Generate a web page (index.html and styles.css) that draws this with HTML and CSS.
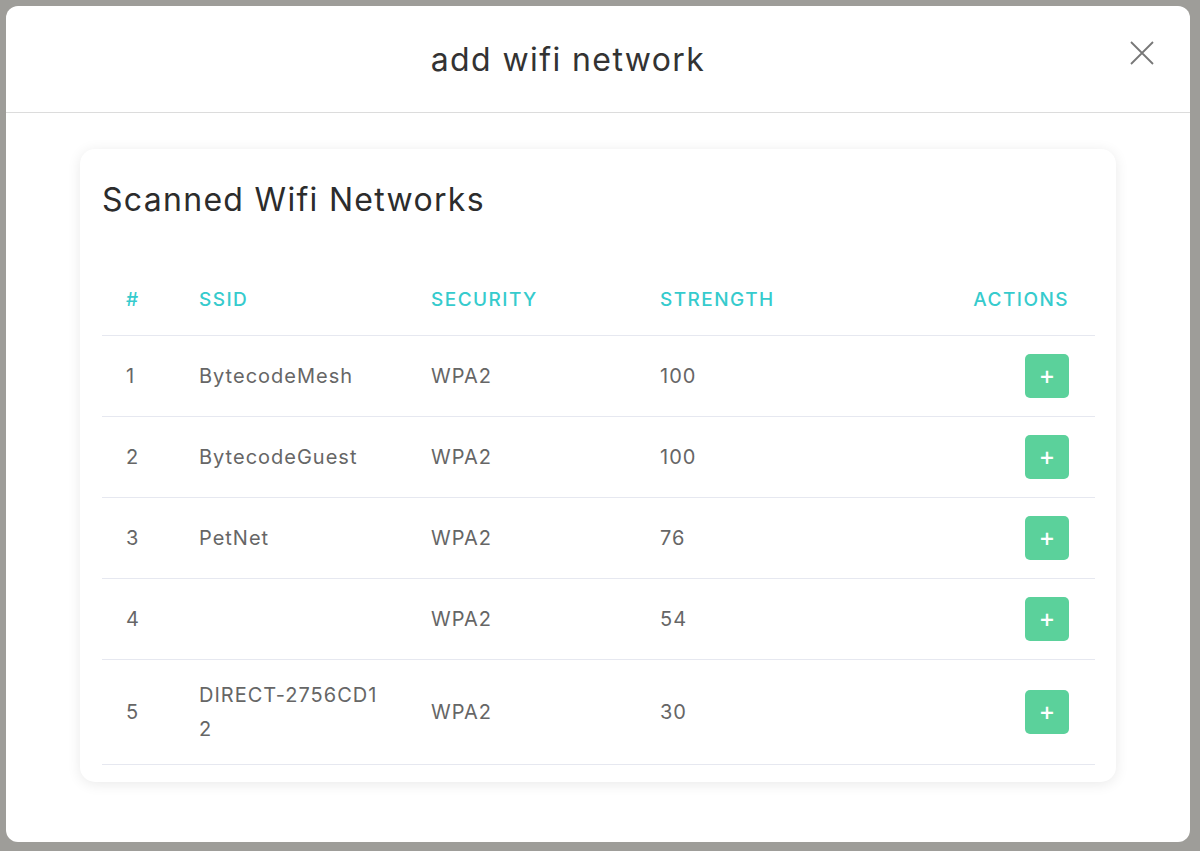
FILE: index.html
```html
<!DOCTYPE html>
<html lang="en">
<head>
    <meta charset="UTF-8">
    <meta name="viewport" content="width=device-width, initial-scale=1.0">
    <link rel="stylesheet" href="styles.css">
    <title>add wifi network</title>
</head>
<body>
    <div class="backdrop">
    <div class="modal">
        <div class="modal-header">
            <h1 class="modal-title">add wifi network</h1>
            <button class="close-btn" type="button" aria-label="Close">
                <svg width="24" height="24" viewBox="0 0 24 24">
                    <path d="M1 1 L23 23 M23 1 L1 23" stroke="#777" stroke-width="1.8" fill="none"/>
                </svg>
            </button>
        </div>
        <div class="modal-body">
            <div class="card">
                <h2 class="card-title">Scanned Wifi Networks</h2>
                <table class="net-table">
                    <thead>
                        <tr>
                            <th class="col-num">#</th>
                            <th class="col-ssid">SSID</th>
                            <th class="col-sec">SECURITY</th>
                            <th class="col-str">STRENGTH</th>
                            <th class="col-act">ACTIONS</th>
                        </tr>
                    </thead>
                    <tbody>
                        <tr>
                            <td>1</td>
                            <td class="ssid">BytecodeMesh</td>
                            <td>WPA2</td>
                            <td>100</td>
                            <td class="col-act"><button class="add-btn" type="button">+</button></td>
                        </tr>
                        <tr>
                            <td>2</td>
                            <td class="ssid">BytecodeGuest</td>
                            <td>WPA2</td>
                            <td>100</td>
                            <td class="col-act"><button class="add-btn" type="button">+</button></td>
                        </tr>
                        <tr>
                            <td>3</td>
                            <td class="ssid">PetNet</td>
                            <td>WPA2</td>
                            <td>76</td>
                            <td class="col-act"><button class="add-btn" type="button">+</button></td>
                        </tr>
                        <tr>
                            <td>4</td>
                            <td class="ssid"></td>
                            <td>WPA2</td>
                            <td>54</td>
                            <td class="col-act"><button class="add-btn" type="button">+</button></td>
                        </tr>
                        <tr>
                            <td>5</td>
                            <td class="ssid">DIRECT-2756CD12</td>
                            <td>WPA2</td>
                            <td>30</td>
                            <td class="col-act"><button class="add-btn" type="button">+</button></td>
                        </tr>
                    </tbody>
                </table>
            </div>
        </div>
    </div>
    </div>
</body>
</html>
```

FILE: styles.css
```css
/* page behind the dialog */
body {
    margin: 0;
    background: #9e9d99;
    font-family: "Inter", "Open Sans", sans-serif;
}

.backdrop {
    padding: 6px 10px 9px 6px;
}

.modal {
    background: #fff;
    border-radius: 12px;
    overflow: hidden;
}

.modal-header {
    display: flex;
    align-items: center;
    height: 106px;
    padding: 0 16px 0 20px;
    border-bottom: 1px solid #dcdcdc;
}

.modal-title {
    flex: 1;
    margin: 0;
    text-align: center;
    font-size: 32px;
    font-weight: 400;
    color: #333;
    letter-spacing: 1.4px;
}

.close-btn {
    width: 64px;
    height: 40px;
    border: none;
    background: none;
    padding: 0;
    display: flex;
    align-items: center;
    justify-content: center;
    margin-top: -12px;
}

.modal-body {
    padding: 36px 74px 60px 74px;
}

.card {
    background: #fff;
    border-radius: 15px;
    box-shadow: 0 2px 14px rgba(0, 0, 0, 0.09);
    padding: 31px 21px 17px 22px;
}

.card-title {
    margin: 0 0 69px 0;
    font-size: 32px;
    font-weight: 400;
    color: #2c2c2c;
    letter-spacing: 1.3px;
}

.net-table {
    width: 100%;
    border-collapse: collapse;
}

.net-table th {
    text-align: left;
    font-size: 19px;
    font-weight: 500;
    color: #36cbcd;
    letter-spacing: 1.45px;
    padding: 0 24px 24px 24px;
    border-bottom: 1px solid #e6e8f0;
}

.net-table td {
    font-size: 20px;
    color: #666;
    line-height: 34px;
    padding: 18px 24px;
    border-bottom: 1px solid #e6e8f0;
    letter-spacing: 1px;
}

.col-num { width: 25px; }
.col-ssid { width: 184px; }
.col-sec { width: 181px; }
.col-str { width: 200px; }

.net-table .col-act {
    text-align: right;
    padding-right: 26px;
}

.ssid {
    word-break: break-all;
}

.add-btn {
    width: 44px;
    height: 44px;
    border: none;
    border-radius: 5px;
    background: #5bd19b;
    color: #fff;
    font-family: "DejaVu Sans", sans-serif;
    font-size: 19px;
    font-weight: 700;
    line-height: 44px;
    padding: 0;
    vertical-align: middle;
}
```
